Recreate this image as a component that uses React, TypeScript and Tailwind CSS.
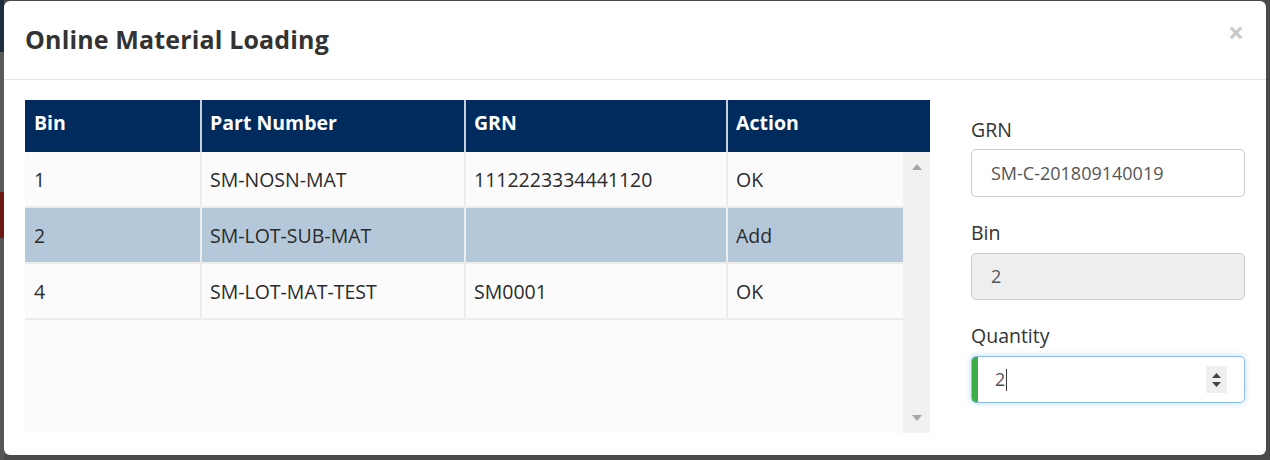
import React from 'react';

const rows = [
  { bin: '1', part: 'SM-NOSN-MAT', grn: '1112223334441120', action: 'OK', selected: false },
  { bin: '2', part: 'SM-LOT-SUB-MAT', grn: '', action: 'Add', selected: true },
  { bin: '4', part: 'SM-LOT-MAT-TEST', grn: 'SM0001', action: 'OK', selected: false },
];

const font = { fontFamily: '"Open Sans", "Noto Sans", sans-serif' };

export default function App() {
  return (
    <div className="w-[1270px] h-[460px] bg-[#4a4a4a] flex overflow-hidden" style={font}>
      {/* dimmed page peeking out on the left */}
      <div className="w-[4px] flex flex-col">
        <div className="h-[52px] bg-[#1d2c3f]" />
        <div className="h-[140px] bg-[#5a5a5a]" />
        <div className="h-[46px] bg-[#6e1a12]" />
        <div className="flex-1 bg-[#555555]" />
      </div>

      <div className="mt-[1px] w-[1262px] h-[454px] rounded-[6px] bg-white flex flex-col">
        {/* header */}
        <div className="h-[79px] border-b border-[#e5e5e5] flex items-center justify-between pl-[21px] pr-[22px]">
          <h4 className="text-[25px] font-bold text-[#333333] tracking-[0.15px]">Online Material Loading</h4>
          <span className="text-[28px] font-bold leading-none text-[#c9c9c9] -mt-[16px]">×</span>
        </div>

        {/* body */}
        <div className="flex pt-[20px] px-[21px]">
          <div className="w-[905px] h-[333px] bg-[#fbfbfb] flex flex-col">
            <div className="h-[52px] bg-[#012b5c] flex text-white font-bold text-[19.5px]">
              <div className="w-[177px] pl-[9px] pt-[8px] border-r-2 border-[#c7d0da]">Bin</div>
              <div className="w-[264px] pl-[8px] pt-[8px] border-r-2 border-[#c7d0da]">Part Number</div>
              <div className="w-[262px] pl-[8px] pt-[8px] border-r-2 border-[#c7d0da]">GRN</div>
              <div className="flex-1 pl-[8px] pt-[8px]">Action</div>
            </div>
            <div className="flex flex-1">
              <div className="w-[878px] flex flex-col">
                {rows.map((r) => (
                  <div
                    key={r.bin}
                    className={`h-[56px] flex items-center text-[19.5px] text-[#2b2b2b] border-b-2 border-[#ececec] ${
                      r.selected ? 'bg-[#b4c8d9]' : 'bg-[#fbfbfb]'
                    }`}
                  >
                    <div className="w-[177px] h-full flex items-center pl-[9px] pt-[2px] border-r-2 border-[#ececec]">{r.bin}</div>
                    <div className="w-[264px] h-full flex items-center pl-[8px] pt-[2px] border-r-2 border-[#ececec]">{r.part}</div>
                    <div className="w-[262px] h-full flex items-center pl-[8px] pt-[2px] border-r-2 border-[#ececec]">{r.grn}</div>
                    <div className="flex-1 h-full flex items-center pl-[8px] pt-[2px]">{r.action}</div>
                  </div>
                ))}
              </div>
              <div className="w-[27px] bg-[#f1f1f1] flex flex-col items-center justify-between pt-[12px] pb-[12px]">
                <svg width="10" height="6" viewBox="0 0 10 6">
                  <path d="M0 6 L5 0 L10 6 Z" fill="#a6a6a6" />
                </svg>
                <svg width="10" height="6" viewBox="0 0 10 6">
                  <path d="M0 0 L10 0 L5 6 Z" fill="#a6a6a6" />
                </svg>
              </div>
            </div>
          </div>

          {/* form */}
          <div className="ml-[41px] w-[274px] flex flex-col pt-[16px]">
            <label className="h-[28px] text-[19.5px] text-[#333333] leading-[28px]">GRN</label>
            <div className="mt-[5px] h-[48px] rounded-[5px] border border-[#cccccc] bg-white flex items-center pl-[19px] text-[18px] text-[#555555]">
              SM-C-201809140019
            </div>
            <label className="mt-[22px] h-[28px] text-[19.5px] text-[#333333] leading-[28px]">Bin</label>
            <div className="mt-[6px] h-[47px] rounded-[5px] border border-[#cccccc] bg-[#eeeeee] flex items-center pl-[19px] text-[18px] text-[#555555]">
              2
            </div>
            <label className="mt-[22px] h-[28px] text-[19.5px] text-[#333333] leading-[28px]">Quantity</label>
            <div className="mt-[6px] h-[47px] rounded-[5px] border border-[#8fbde6] bg-white flex items-center shadow-[0_0_6px_rgba(102,175,233,0.45)] overflow-hidden">
              <div className="w-[6px] h-full bg-[#3fae48]" />
              <div className="flex-1 flex items-center pl-[17px] text-[18px] text-[#555555]">
                2<span className="ml-[1px] w-[1px] h-[22px] bg-[#333333]" />
              </div>
              <div className="mr-[17px] w-[21px] h-[27px] bg-[#efefef] flex flex-col items-center justify-center gap-[4px]">
                <svg width="9" height="5" viewBox="0 0 9 5">
                  <path d="M0 5 L4.5 0 L9 5 Z" fill="#444444" />
                </svg>
                <svg width="9" height="5" viewBox="0 0 9 5">
                  <path d="M0 0 L9 0 L4.5 5 Z" fill="#444444" />
                </svg>
              </div>
            </div>
          </div>
        </div>
      </div>
      <div className="flex-1" />
    </div>
  );
}
